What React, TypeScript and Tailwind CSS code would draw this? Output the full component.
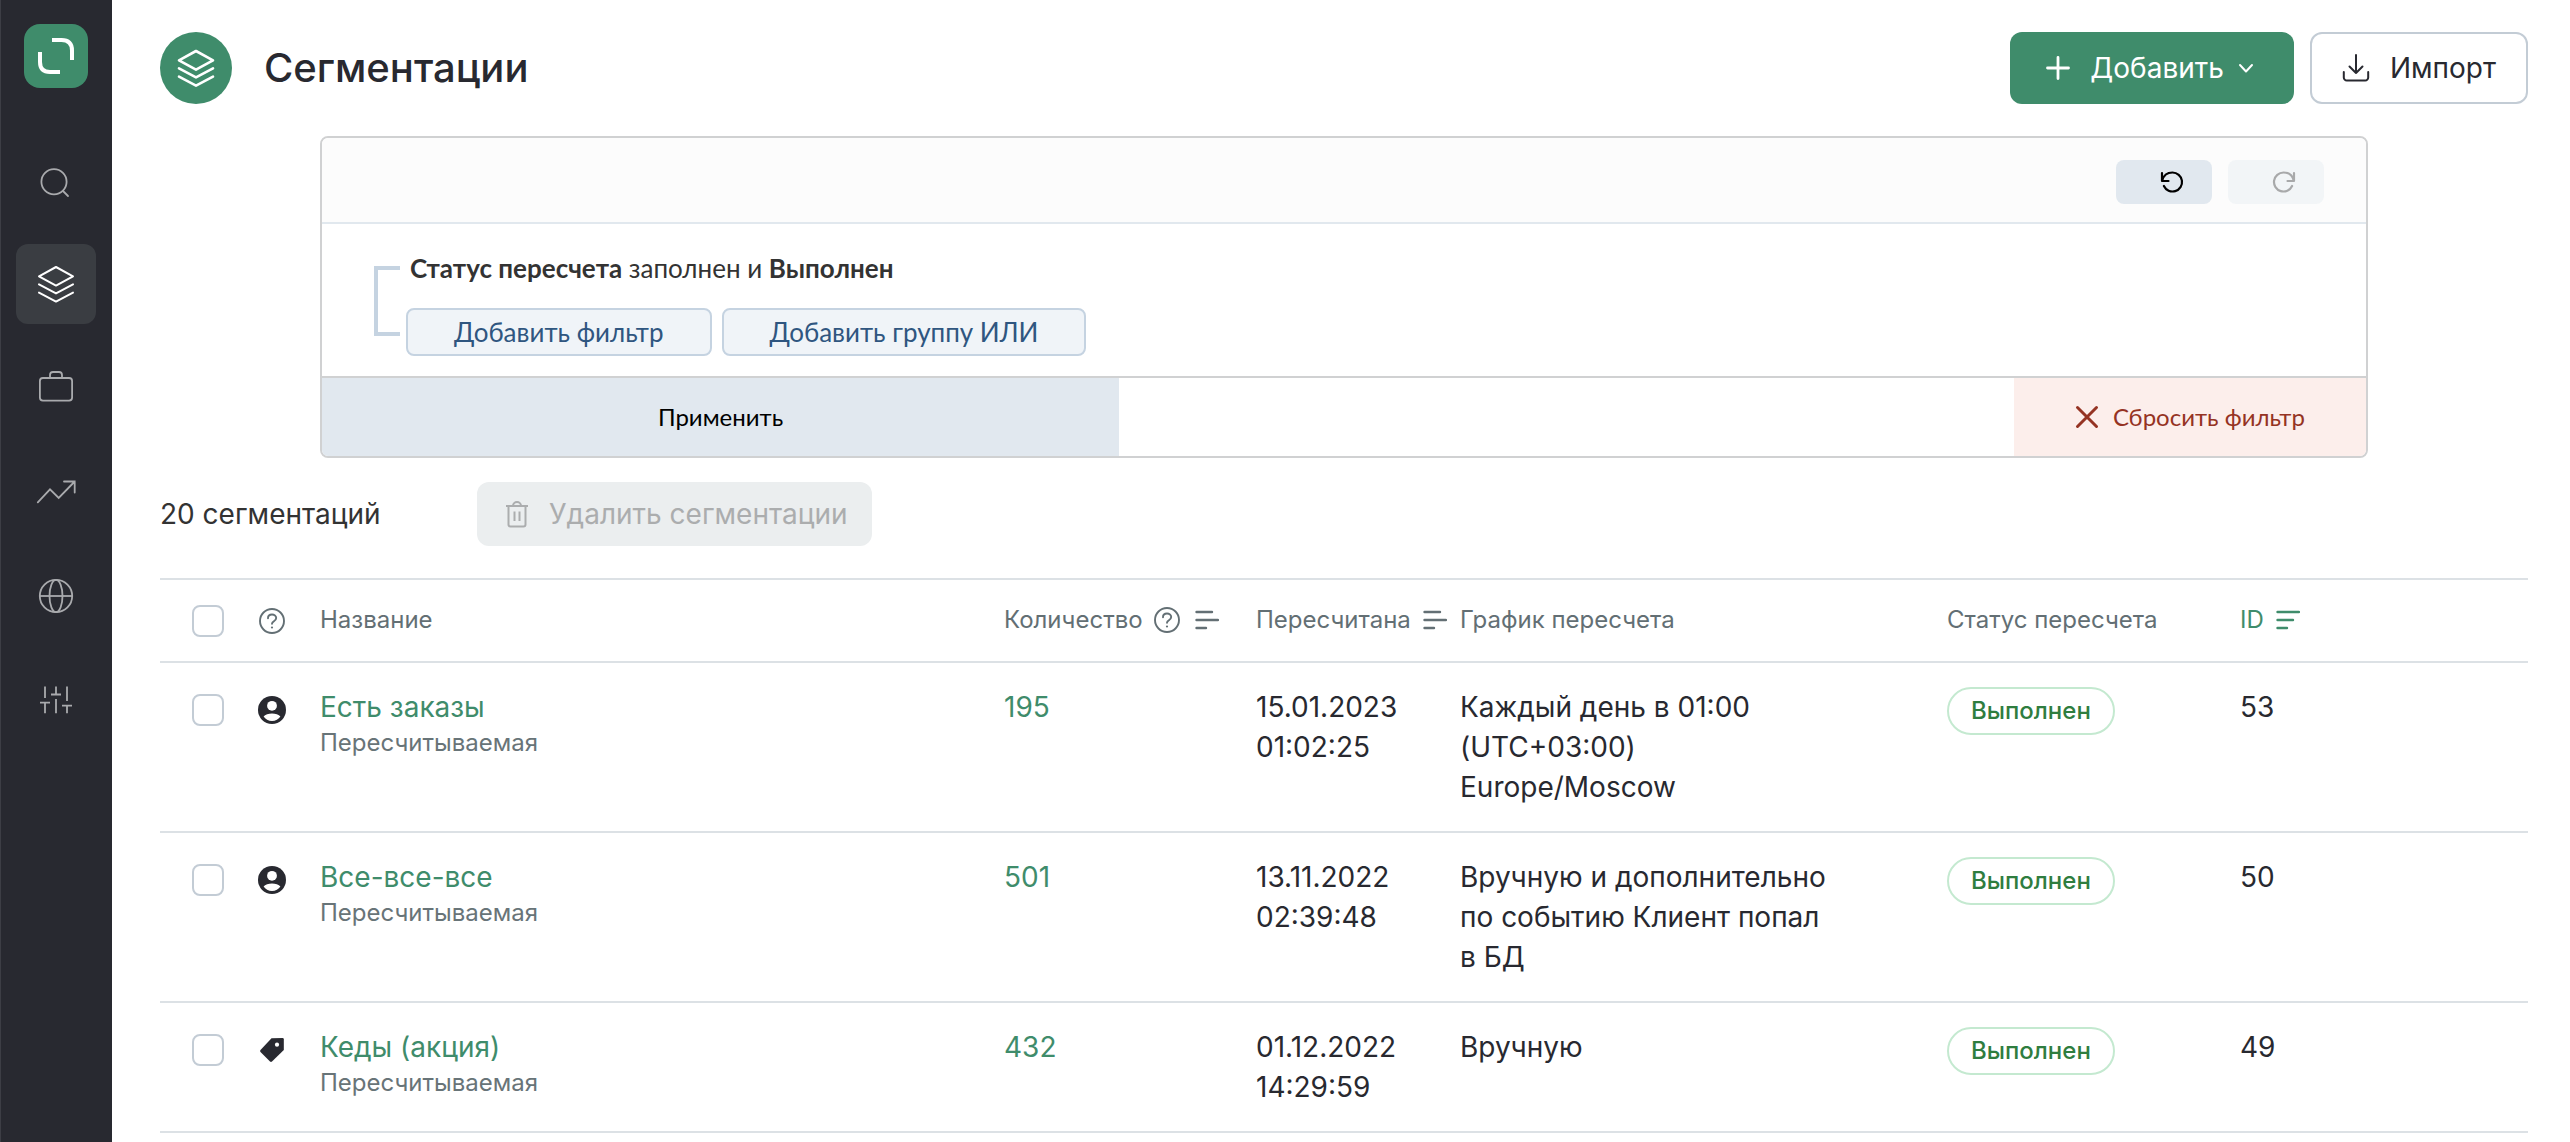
import React from "react";

const NAV = "h-20 w-20 flex items-center justify-center rounded-xl shrink-0";

function LayersIcon({ thick }: { thick?: boolean }) {
  return (
    <svg width="40" height="40" viewBox="0 0 40 40" fill="none" stroke="currentColor" strokeWidth={thick ? 2.6 : 2} strokeLinejoin="round" strokeLinecap="round">
      <path d="M20 3 37 12.3 20 21.6 3 12.3Z" />
      <path d="M3 20.4 20 29.4 37 20.4" />
      <path d="M3 28.6 20 37.6 37 28.6" />
    </svg>
  );
}

function HelpIcon() {
  return (
    <svg width="28" height="28" viewBox="0 0 28 28" fill="none" stroke="currentColor" strokeWidth="1.9" strokeLinecap="round" className="shrink-0">
      <circle cx="14" cy="14" r="12" />
      <path d="M10 11.2C10 8.7 11.8 7.5 14 7.5s4.2 1.4 4.2 3.6c0 3.2-4.2 3-4.2 5.6" />
      <circle cx="14" cy="20.5" r="1.1" fill="currentColor" stroke="none" />
    </svg>
  );
}

function SortIcon({ active }: { active?: boolean }) {
  const w = active ? [22, 16, 10] : [16, 22, 10];
  return (
    <svg width="24" height="20" viewBox="0 0 24 20" stroke="currentColor" strokeWidth="2.4" strokeLinecap="round" className="shrink-0">
      {w.map((v, i) => (
        <path key={i} d={`M1.5 ${2 + i * 8}H${v + 1}`} />
      ))}
    </svg>
  );
}

function AccountIcon() {
  return (
    <svg width="28" height="28" viewBox="0 0 28 28">
      <circle cx="14" cy="14" r="14" fill="#282930" />
      <circle cx="14" cy="9.8" r="4.9" fill="#fff" />
      <path d="M5.6 20.5c1.4-1.9 5.2-3.1 8.4-3.1s7 1.2 8.4 3.1c-1.7 2.7-4.9 4.5-8.4 4.5s-6.7-1.8-8.4-4.5Z" fill="#fff" />
    </svg>
  );
}

function TagIcon() {
  return (
    <svg width="28" height="28" viewBox="0 0 28 28">
      <path fill="#282930" d="M13.5 2.3 24.5 2Q25.8 2 25.8 3.3V14L14 25.5Q13 26.4 12 25.5L2.5 16Q1.6 15 2.5 14Z" />
      <circle cx="19" cy="8.7" r="2.1" fill="#fff" />
    </svg>
  );
}

const navItems: { label: string; icon: React.ReactNode; active?: boolean }[] = [
  {
    label: "Поиск",
    icon: (
      <svg width="40" height="40" viewBox="0 0 40 40" fill="none" stroke="currentColor" strokeWidth="1.8" strokeLinecap="round">
        <circle cx="18" cy="21.7" r="12.6" />
        <path d="m27 31 5 5" />
      </svg>
    ),
  },
  { label: "Сегментации", icon: <LayersIcon />, active: true },
  {
    label: "Кампании",
    icon: (
      <svg width="40" height="40" viewBox="0 0 40 40" fill="none" stroke="currentColor" strokeWidth="1.8">
        <rect x="3.9" y="10" width="32.2" height="22.6" rx="3" />
        <path d="M14 10V7a3 3 0 0 1 3-3h6a3 3 0 0 1 3 3v3" />
      </svg>
    ),
  },
  {
    label: "Отчёты",
    icon: (
      <svg width="40" height="40" viewBox="0 0 40 40" fill="none" stroke="currentColor" strokeWidth="1.8" strokeLinecap="round">
        <path d="M1.8 30.3 14 17.3l8.7 8.7L38.7 9.5M28 9.5h10.7V20.5" />
      </svg>
    ),
  },
  {
    label: "Сайты",
    icon: (
      <svg width="40" height="40" viewBox="0 0 40 40" fill="none" stroke="currentColor" strokeWidth="1.8">
        <circle cx="20" cy="20" r="16.2" />
        <ellipse cx="20" cy="20" rx="6.5" ry="16.2" />
        <path d="M4 20h32" />
      </svg>
    ),
  },
  {
    label: "Настройки",
    icon: (
      <svg width="40" height="40" viewBox="0 0 40 40" fill="none" stroke="currentColor" strokeWidth="1.8">
        <path d="M9 6.5v11.5M9 22.7v10.6M4 22.7h10M20 6.5v8M15 14.5h10M20 19v14.3M31 6.5v14.5M31 25.7v7.6M26 25.7h10" />
      </svg>
    ),
  },
];

type Row = {
  kind: "person" | "tag";
  name: string;
  count: string;
  date: string;
  time: string;
  schedule: string;
  id: string;
};

const rows: Row[] = [
  { kind: "person", name: "Есть заказы", count: "195", date: "15.01.2023", time: "01:02:25", schedule: "Каждый день в 01:00 (UTC+03:00) Europe/Moscow", id: "53" },
  { kind: "person", name: "Все-все-все", count: "501", date: "13.11.2022", time: "02:39:48", schedule: "Вручную и дополнительно по событию Клиент попал в БД", id: "50" },
  { kind: "tag", name: "Кеды (акция)", count: "432", date: "01.12.2022", time: "14:29:59", schedule: "Вручную", id: "49" },
];

function CheckBox({ label }: { label: string }) {
  return (
    <input
      type="checkbox"
      aria-label={label}
      className="block h-8 w-8 appearance-none rounded-lg border-2 border-[#c3ccd5] bg-white checked:bg-[#3f8c6b]"
    />
  );
}

export default function App() {
  return (
    <div className="flex min-h-screen bg-white font-['Inter',sans-serif] text-[28px] leading-10 text-[#282930]">
      <nav className="flex w-28 shrink-0 flex-col items-center bg-[#282930] pt-6 shadow-[inset_1px_0_0_#3d3e45]">
        <a href="#" aria-label="Главная" className="mb-[52px] flex h-16 w-16 items-center justify-center rounded-2xl bg-[#3f8c6b]">
          <svg width="40" height="40" viewBox="0 0 40 40" fill="none" stroke="#fff" strokeWidth="4">
            <path d="M16 4h9.5q10.5 0 10.5 10.5V24" />
            <path d="M4 16v10q0 10 10 10h10" />
          </svg>
        </a>
        <div className="flex flex-col gap-6">
          {navItems.map((n) => (
            <a key={n.label} href="#" aria-label={n.label} className={n.active ? `${NAV} bg-[#3a3d42] text-white` : `${NAV} text-[#a9aaad]`}>
              {n.icon}
            </a>
          ))}
        </div>
      </nav>

      <main className="min-w-0 flex-1 pt-8 pr-[42px] pl-12">
        <header className="flex items-center">
          <div className="flex h-[72px] w-[72px] items-center justify-center rounded-full bg-[#3f8c6b] text-white">
            <LayersIcon thick />
          </div>
          <h1 className="ml-8 text-[40px] leading-[48px] font-medium">Сегментации</h1>
          <div className="ml-auto flex gap-4">
            <button type="button" className="flex h-[72px] items-center rounded-xl bg-[#3f8c6b] pr-10 pl-9 text-white">
              <svg width="24" height="24" viewBox="0 0 24 24" stroke="currentColor" strokeWidth="2.8" strokeLinecap="round" className="mr-5">
                <path d="M12 1.5v21M1.5 12h21" />
              </svg>
              Добавить
              <svg width="16" height="16" viewBox="0 0 16 16" fill="none" stroke="currentColor" strokeWidth="2" strokeLinecap="round" strokeLinejoin="round" className="ml-[14px]">
                <path d="m2 5 6 6.5L14 5" />
              </svg>
            </button>
            <button type="button" className="flex h-[72px] items-center rounded-xl border-2 border-[#c3ccd5] bg-white px-[30px]">
              <svg width="28" height="28" viewBox="0 0 28 28" fill="none" stroke="currentColor" strokeWidth="2" strokeLinecap="round" strokeLinejoin="round" className="mr-5">
                <path d="M14 1v18M7.5 12.5 14 19l6.5-6.5M1.8 18v5.5a3 3 0 0 0 3 3h18.4a3 3 0 0 0 3-3V18" />
              </svg>
              Импорт
            </button>
          </div>
        </header>

        <section className="mt-8 mr-40 ml-40 overflow-hidden rounded-lg border-2 border-[#d0d1d2] font-['Lato',sans-serif] text-[26px]">
          <div className="flex h-[86px] items-start justify-end gap-4 border-b-2 border-[#e1e8ee] bg-[#fcfcfc] pt-[22px] pr-[42px]">
            <button type="button" aria-label="Отменить" className="flex h-11 w-24 items-center justify-center rounded-lg bg-[#e1e8ef] pl-4 text-black">
              <svg width="24" height="24" viewBox="0 0 24 24" fill="none" stroke="currentColor" strokeWidth="2.2" strokeLinecap="round" strokeLinejoin="round">
                <path d="M2 3v8h6.5M2.3 10.5C3.5 5.5 7.5 2.5 12.5 2.5a9.5 9.5 0 1 1-8.6 13.5" />
              </svg>
            </button>
            <button type="button" disabled aria-label="Повторить" className="flex h-11 w-24 items-center justify-center rounded-lg bg-[#f2f5f7] pl-4 text-[#a8a9aa]">
              <svg width="24" height="24" viewBox="0 0 24 24" fill="none" stroke="currentColor" strokeWidth="2.2" strokeLinecap="round" strokeLinejoin="round">
                <path d="M22 3v8h-6.5M21.7 10.5C20.5 5.5 16.5 2.5 11.5 2.5a9.5 9.5 0 1 0 8.6 13.5" />
              </svg>
            </button>
          </div>
          <div className="flex pt-6 pb-5 pl-[52px]">
            <div className="mt-[18px] mr-1.5 h-[70px] w-[26px] border-y-4 border-l-4 border-[#c5d3e1]" />
            <div>
              <p className="pl-1 text-[#333]">
                <b>Статус пересчета</b> заполнен и <b>Выполнен</b>
              </p>
              <div className="mt-5 flex gap-[10px] text-[#2f5680]">
                <button type="button" className="h-12 rounded-lg border-2 border-[#c5d3e1] bg-[#f0f4f8] px-[46px] leading-[44px]">Добавить фильтр</button>
                <button type="button" className="h-12 rounded-lg border-2 border-[#c5d3e1] bg-[#f0f4f8] px-[46px] leading-[44px]">Добавить группу ИЛИ</button>
              </div>
            </div>
          </div>
          <div className="flex h-20 justify-between border-t-2 border-[#d0d1d2] text-[24px]">
            <button type="button" className="w-[39%] bg-[#e1e8ef] text-black">Применить</button>
            <button type="button" className="flex w-[352px] items-center justify-center gap-[14px] bg-[#fceeeb] text-[#953323]">
              <svg width="24" height="24" viewBox="0 0 24 24" stroke="currentColor" strokeWidth="3" strokeLinecap="round">
                <path d="m2.5 2.5 19 19M21.5 2.5l-19 19" />
              </svg>
              Сбросить фильтр
            </button>
          </div>
        </section>

        <div className="mt-6 flex items-center">
          <p className="w-[317px] text-[#333]">20 сегментаций</p>
          <button type="button" disabled className="flex h-16 items-center rounded-xl bg-[#ebeeef] pr-6 pl-7 text-[#abadae]">
            <svg width="24" height="28" viewBox="0 0 24 28" fill="none" stroke="currentColor" strokeWidth="2" strokeLinejoin="round" className="mr-5">
              <path d="M1 6h22M3.5 6v18.5a2 2 0 0 0 2 2h13a2 2 0 0 0 2-2V6M8 6a4 4 0 0 1 8 0M9.5 11.5v9.5M14.5 11.5v9.5" />
            </svg>
            Удалить сегментации
          </button>
        </div>

        <table className="mt-8 w-full table-fixed border-collapse text-left">
          <colgroup>
            <col className="w-20" />
            <col className="w-20" />
            <col />
            <col className="w-[252px]" />
            <col className="w-[204px]" />
            <col className="w-[487px]" />
            <col className="w-[293px]" />
            <col className="w-[288px]" />
          </colgroup>
          <thead>
            <tr className="h-[83px] border-y-2 border-[#dce1e5] text-[24px] leading-8 text-[#636f74] [&>th]:font-normal">
              <th className="pl-8"><CheckBox label="Выбрать все" /></th>
              <th className="pl-[18px]"><HelpIcon /></th>
              <th className="pb-0.5">Название</th>
              <th className="pb-0.5">
                <span className="flex items-center">
                  Количество
                  <span className="mr-[14px] ml-[10px]"><HelpIcon /></span>
                  <SortIcon />
                </span>
              </th>
              <th className="pb-0.5">
                <span className="flex items-center gap-3">
                  Пересчитана
                  <SortIcon />
                </span>
              </th>
              <th className="pb-0.5">График пересчета</th>
              <th className="pb-0.5">Статус пересчета</th>
              <th className="pb-0.5">
                <span className="flex items-center gap-3 text-[#3f8c6b]">
                  ID
                  <SortIcon active />
                </span>
              </th>
            </tr>
          </thead>
          <tbody>
            {rows.map((r) => (
              <tr key={r.id} className="border-b-2 border-[#dce1e5] align-top [&>td]:py-6">
                <td className="pl-8">
                  <div className="pt-[7px]"><CheckBox label={r.name} /></div>
                </td>
                <td className="pl-[18px]">
                  <div className="pt-[9px]">{r.kind === "person" ? <AccountIcon /> : <TagIcon />}</div>
                </td>
                <td>
                  <a href="#" className="block text-[#3f8c6b]">{r.name}</a>
                  <div className="text-[24px] leading-8 text-[#687478]">Пересчитываемая</div>
                </td>
                <td><a href="#" className="text-[#3f8c6b]">{r.count}</a></td>
                <td>{r.date}<br />{r.time}</td>
                <td><div className="max-w-[380px]">{r.schedule}</div></td>
                <td>
                  <span className="flex h-12 w-fit items-center rounded-full border-2 border-[#c4e9d0] px-[22px] text-[24px] font-medium text-[#2f7d3f]">Выполнен</span>
                </td>
                <td>{r.id}</td>
              </tr>
            ))}
          </tbody>
        </table>
      </main>
    </div>
  );
}
